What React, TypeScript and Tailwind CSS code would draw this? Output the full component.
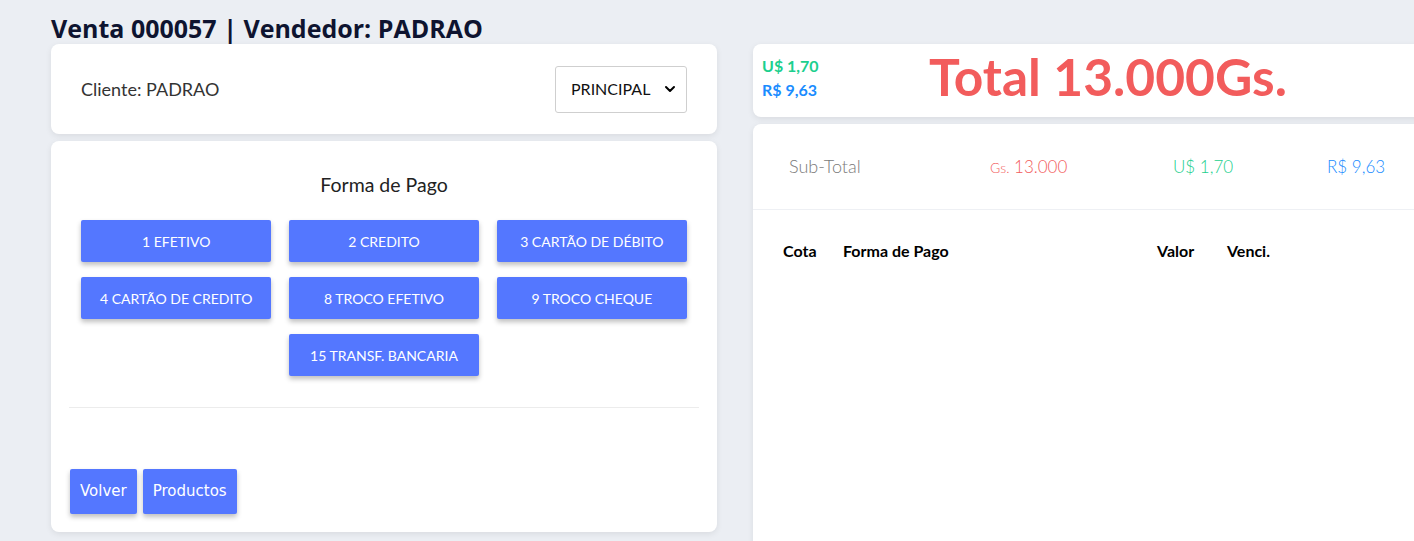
import React from 'react';
import { ChevronDown } from 'lucide-react';

const formas = [
  '1 EFETIVO',
  '2 CREDITO',
  '3 CARTÃO DE DÉBITO',
  '4 CARTÃO DE CREDITO',
  '8 TROCO EFETIVO',
  '9 TROCO CHEQUE',
];

const App: React.FC = () => {
  return (
    <div className="min-h-screen w-full overflow-hidden bg-[#ebeef3] pl-[51px] pt-[12px] font-['Lato',sans-serif] text-[#222]">
      <h1 className="h-[32px] font-['Open_Sans',sans-serif] text-[25px] font-bold leading-[32px] text-[#0e1430]">
        Venta 000057 | Vendedor: PADRAO
      </h1>

      <div className="flex items-start gap-[36px]">
        {/* left column */}
        <div className="w-[666px] shrink-0 space-y-[7px]">
          <div className="flex h-[90px] items-center justify-between rounded-lg bg-white px-[30px] shadow-[0_2px_6px_rgba(0,0,0,0.08)]">
            <span className="text-[18px] text-[#333]">Cliente: PADRAO</span>
            <div className="flex h-[47px] w-[132px] items-center justify-between rounded-[3px] border border-[#cfcfcf] bg-white pl-[15px] pr-[8px]">
              <span className="text-[16px] text-[#111]">PRINCIPAL</span>
              <ChevronDown className="h-4 w-4 text-black" strokeWidth={3} />
            </div>
          </div>

          <div className="h-[391px] rounded-lg bg-white shadow-[0_2px_6px_rgba(0,0,0,0.08)]">
            <div className="pt-[32px] text-center text-[19.5px] leading-[24px] text-[#222]">Forma de Pago</div>
            <div className="mx-[30px] mt-[23px] grid grid-cols-3 gap-x-[17.5px] gap-y-[15px]">
              {formas.map((f) => (
                <button
                  key={f}
                  className="h-[42px] rounded-[2px] bg-[#5477ff] text-[14px] text-white shadow-[0_3px_5px_rgba(0,0,0,0.25)]"
                >
                  {f}
                </button>
              ))}
              <button className="col-start-2 h-[42px] rounded-[2px] bg-[#5477ff] text-[14px] text-white shadow-[0_3px_5px_rgba(0,0,0,0.25)]">
                15 TRANSF. BANCARIA
              </button>
            </div>
            <div className="mx-[18px] mt-[31px] border-t border-[#ececec]" />
            <div className="ml-[19px] mt-[61px] flex gap-[6px]">
              <button className="h-[45px] rounded-[2px] bg-[#5477ff] px-[10px] font-['DejaVu_Sans',sans-serif] text-[15px] text-white shadow-[0_3px_5px_rgba(0,0,0,0.25)]">
                Volver
              </button>
              <button className="h-[45px] rounded-[2px] bg-[#5477ff] px-[10px] font-['DejaVu_Sans',sans-serif] text-[15px] text-white shadow-[0_3px_5px_rgba(0,0,0,0.25)]">
                Productos
              </button>
            </div>
          </div>
        </div>

        {/* right column */}
        <div className="w-[680px] shrink-0 space-y-[7px]">
          <div className="flex h-[73px] items-center rounded-lg bg-white pl-[9px] shadow-[0_2px_6px_rgba(0,0,0,0.08)]">
            <div className="mb-[6px] w-[60px] text-[16px] font-bold leading-[24px]">
              <div className="text-[#1ccf8e]">U$ 1,70</div>
              <div className="text-[#1a8cff]">R$ 9,63</div>
            </div>
            <div className="mb-[8px] ml-[107px] text-[51.5px] font-bold leading-none text-[#f25c5c]">Total 13.000Gs.</div>
          </div>

          <div className="h-[430px] rounded-lg bg-white shadow-[0_2px_6px_rgba(0,0,0,0.08)]">
            <div className="grid h-[86px] grid-cols-[201px_183px_154px_1fr] items-center border-b border-[#eef0f4] pl-[36px] text-[17px] font-light">
              <span className="text-[18px] text-[#7a7a7a]">Sub-Total</span>
              <span className="text-[#f25c5c]">
                <span className="text-[14px]">Gs.</span> 13.000
              </span>
              <span className="text-[#1ccf8e]">U$ 1,70</span>
              <span className="text-[#1a8cff]">R$ 9,63</span>
            </div>
            <div className="grid grid-cols-[60px_314px_70px_1fr] pl-[30px] pt-[30px] text-[16px] font-bold leading-[22px] text-black">
              <span>Cota</span>
              <span>Forma de Pago</span>
              <span>Valor</span>
              <span>Venci.</span>
            </div>
          </div>
        </div>
      </div>
    </div>
  );
};

export default App;
